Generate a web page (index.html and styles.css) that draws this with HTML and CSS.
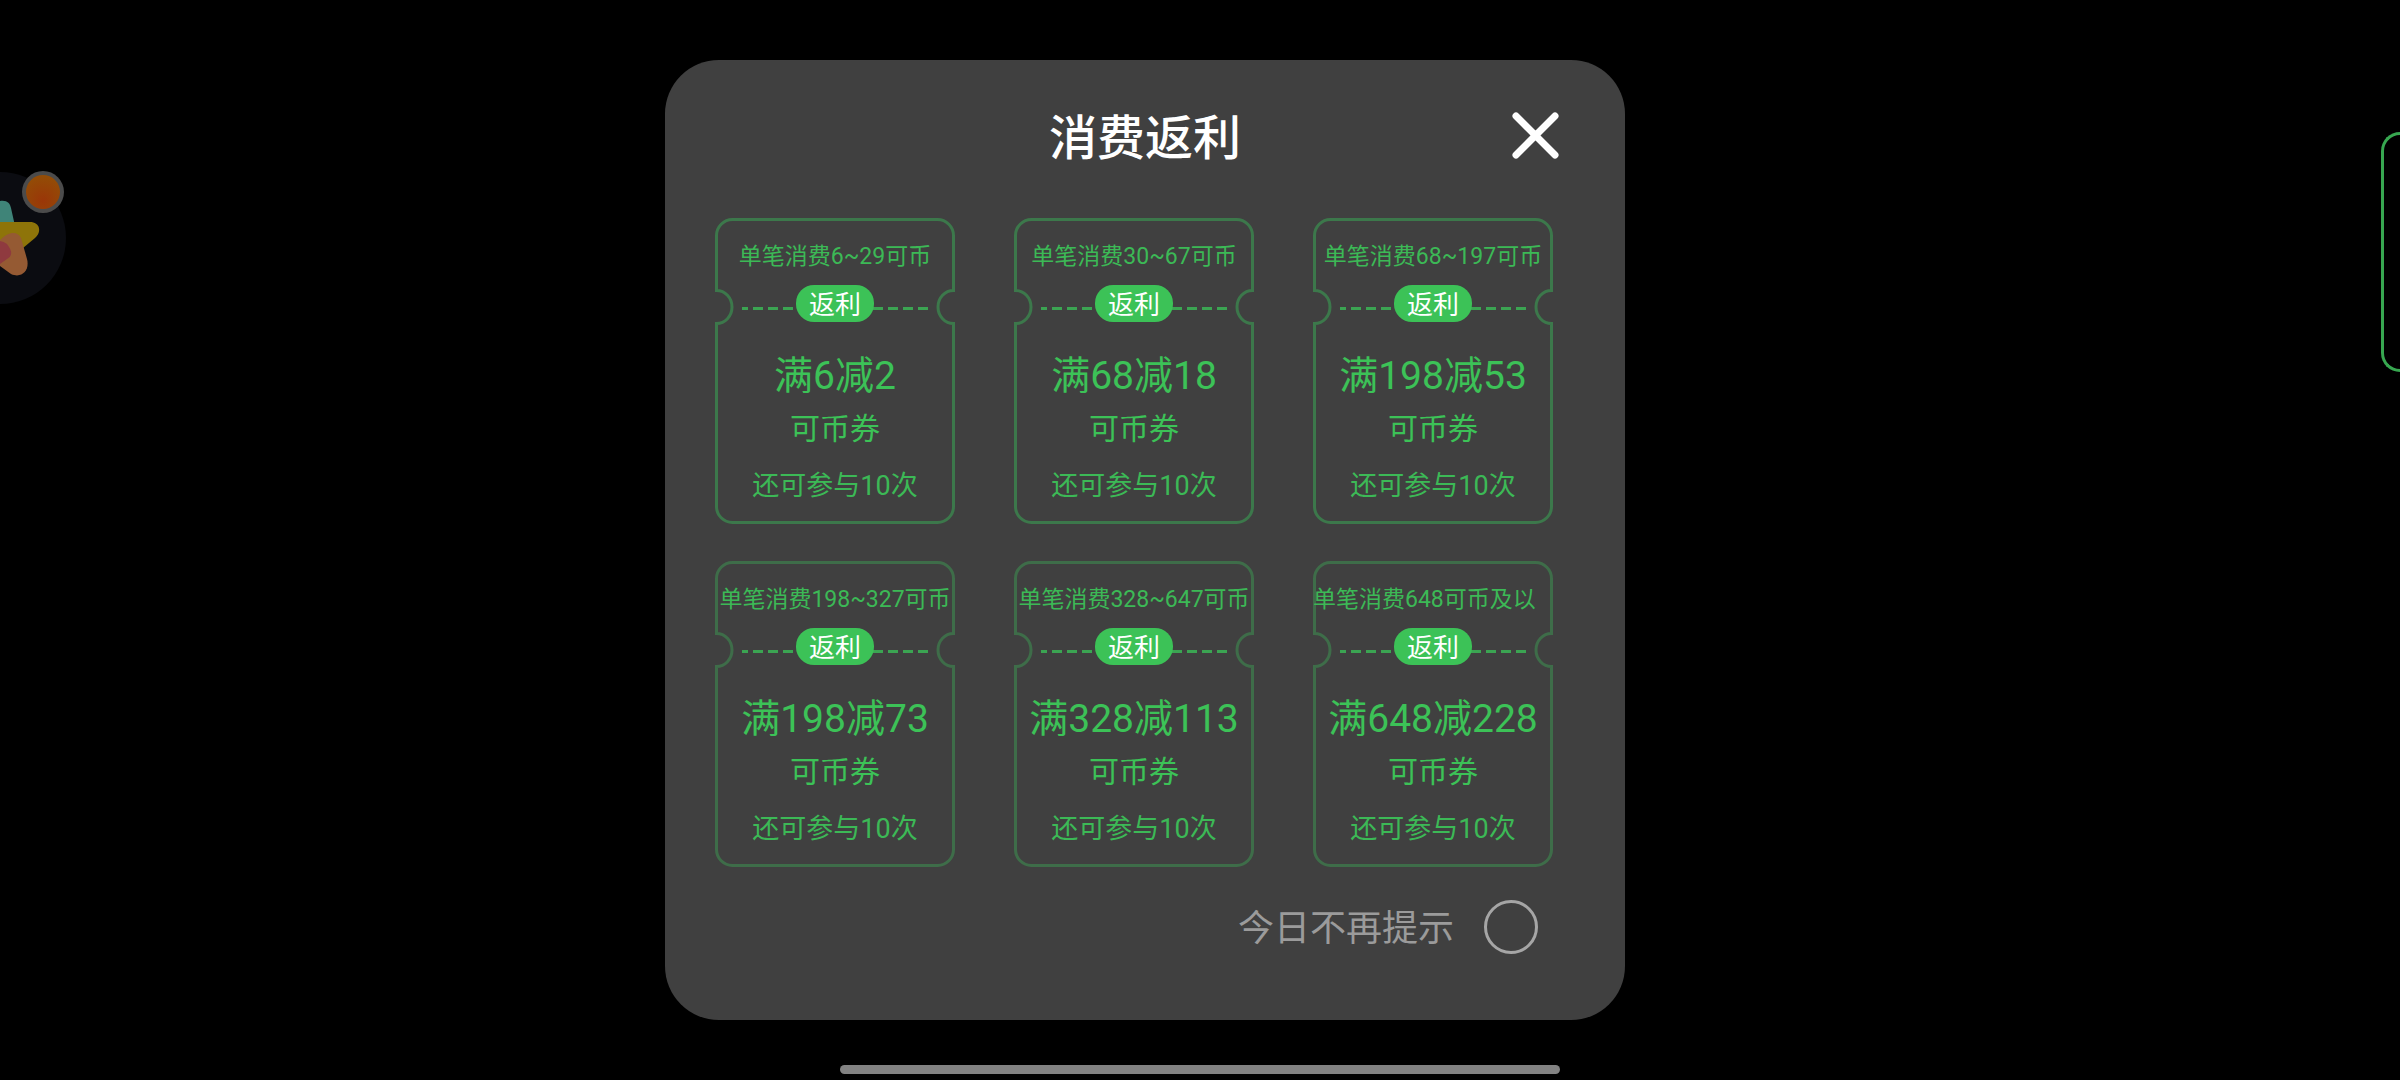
FILE: index.html
```html
<!DOCTYPE html>
<html lang="zh-CN">
<head>
<meta charset="utf-8">
<meta name="viewport" content="width=device-width, initial-scale=1">
<title>消费返利</title>
<link rel="stylesheet" href="styles.css">
</head>
<body>
<svg class="defs" aria-hidden="true">
  <symbol id="ticket-shape" viewBox="0 0 240 306">
    <path class="outline" d="M17.500 1.500H222.500A16 16 0 0 1 238.500 17.500V72.500A15.500 16.500 0 0 0 238.500 105.500V288.500A16 16 0 0 1 222.500 304.500H17.500A16 16 0 0 1 1.500 288.500V105.500A15.500 16.500 0 0 0 1.500 72.500V17.500A16 16 0 0 1 17.500 1.500Z"/>
    <path class="perforation" d="M27 90.500H213"/>
  </symbol>
</svg>

<svg class="float-ball" viewBox="0 0 80 150" aria-hidden="true">
  <defs>
    <radialGradient id="dot" cx="50%" cy="75%" r="70%">
      <stop offset="0" stop-color="#9a3608"/>
      <stop offset="1" stop-color="#934c06"/>
    </radialGradient>
  </defs>
  <circle cx="0" cy="78" r="66" fill="#0b0c11"/>
  <path d="M0 41C7 40 10 43 11 48L15 66H0Z" fill="#3f8478"/>
  <path d="M0 62H30C40 62 42 72 35 78L23 88L0 92Z" fill="#8e7409"/>
  <path d="M0 80C8 72 17 70 21 78L27 99C30 110 22 119 11 114L0 106Z" fill="#955a33"/>
  <path d="M0 81C4 82 7 83 9 87C13 93 11 97 7 99L0 104Z" fill="#8f3a3f"/>
  <circle cx="43" cy="32" r="21" fill="#4b4b4b"/>
  <circle cx="43" cy="32" r="17" fill="url(#dot)"/>
</svg>
<div class="side-card" aria-hidden="true"></div>

<main class="stage">
  <section class="dialog" role="dialog" aria-labelledby="dialog-title">
    <header class="dialog-header">
      <h1 class="dialog-title" id="dialog-title">消费返利</h1>
      <button class="close" type="button" aria-label="关闭">
        <svg viewBox="0 0 48 48" aria-hidden="true"><path d="M4 4L43 43M43 4L4 43"/></svg>
      </button>
    </header>

    <ul class="tickets">
      <li class="ticket">
        <svg class="ticket-bg" aria-hidden="true"><use href="#ticket-shape"/></svg>
        <p class="condition">单笔消费6~29可币</p>
        <span class="badge">返利</span>
        <p class="amount">满6减2</p>
        <p class="kind">可币券</p>
        <p class="remaining">还可参与10次</p>
      </li>
      <li class="ticket">
        <svg class="ticket-bg" aria-hidden="true"><use href="#ticket-shape"/></svg>
        <p class="condition">单笔消费30~67可币</p>
        <span class="badge">返利</span>
        <p class="amount">满68减18</p>
        <p class="kind">可币券</p>
        <p class="remaining">还可参与10次</p>
      </li>
      <li class="ticket">
        <svg class="ticket-bg" aria-hidden="true"><use href="#ticket-shape"/></svg>
        <p class="condition">单笔消费68~197可币</p>
        <span class="badge">返利</span>
        <p class="amount">满198减53</p>
        <p class="kind">可币券</p>
        <p class="remaining">还可参与10次</p>
      </li>
      <li class="ticket ticket-dim">
        <svg class="ticket-bg" aria-hidden="true"><use href="#ticket-shape"/></svg>
        <p class="condition">单笔消费198~327可币</p>
        <span class="badge">返利</span>
        <p class="amount">满198减73</p>
        <p class="kind">可币券</p>
        <p class="remaining">还可参与10次</p>
      </li>
      <li class="ticket ticket-dim">
        <svg class="ticket-bg" aria-hidden="true"><use href="#ticket-shape"/></svg>
        <p class="condition">单笔消费328~647可币</p>
        <span class="badge">返利</span>
        <p class="amount">满328减113</p>
        <p class="kind">可币券</p>
        <p class="remaining">还可参与10次</p>
      </li>
      <li class="ticket ticket-dim">
        <svg class="ticket-bg" aria-hidden="true"><use href="#ticket-shape"/></svg>
        <p class="condition condition-start">单笔消费648可币及以</p>
        <span class="badge">返利</span>
        <p class="amount">满648减228</p>
        <p class="kind">可币券</p>
        <p class="remaining">还可参与10次</p>
      </li>
    </ul>

    <footer class="dialog-footer">
      <label class="mute" for="mute-today">今日不再提示</label>
      <input class="mute-box" type="checkbox" id="mute-today">
    </footer>
  </section>
</main>
<div class="home-bar" aria-hidden="true"></div>
</body>
</html>
```

FILE: styles.css
```css
* {
  box-sizing: border-box;
}

body {
  margin: 0;
  min-height: 100vh;
  position: relative;
  overflow-x: hidden;
  background: #000;
  color: #3cc257;
  font-family: Roboto, "Noto Sans CJK SC", sans-serif;
}

h1,
p,
ul {
  margin: 0;
  padding: 0;
}

.defs {
  position: absolute;
  width: 0;
  height: 0;
}

/* Screen area; the right inset mirrors the camera cut-out */
.stage {
  min-height: 100vh;
  padding: 60px 110px 60px 0;
  display: flex;
  align-items: center;
  justify-content: center;
}

.dialog {
  width: 960px;
  max-width: 100%;
  padding: 40px 0 66px;
  border-radius: 54px;
  background: #404040;
}

.dialog-header {
  display: grid;
  grid-template-columns: 1fr auto 1fr;
  align-items: center;
  padding: 0 65px;
}

.dialog-title {
  grid-column: 2;
  color: #fff;
  font-size: 48px;
  font-weight: 500;
  line-height: 78px;
}

.close {
  justify-self: end;
  width: 48px;
  height: 54px;
  padding: 0 0 6px;
  border: 0;
  background: none;
  cursor: pointer;
}

.close svg {
  display: block;
  width: 48px;
  height: 48px;
  fill: none;
  stroke: #fff;
  stroke-width: 7;
  stroke-linecap: round;
}

.tickets {
  display: grid;
  grid-template-columns: repeat(3, 1fr);
  gap: 37px 59px;
  margin-top: 40px;
  padding: 0 72px 0 50px;
  list-style: none;
}

.ticket {
  position: relative;
  display: flex;
  flex-direction: column;
  align-items: center;
  padding: 19px 0 18px;
  color: #3cc257;
  white-space: nowrap;
}

.ticket-bg {
  position: absolute;
  inset: 0;
  z-index: 0;
  width: 100%;
  height: 100%;
  color: #3c784b;
}

.ticket-dim .ticket-bg {
  color: #3e6d49;
}

.outline {
  fill: none;
  stroke: currentColor;
  stroke-width: 3;
}

.perforation {
  fill: none;
  stroke: #3ba452;
  stroke-width: 3;
  stroke-dasharray: 10 5;
  stroke-dashoffset: 4;
}

.condition,
.badge,
.amount,
.kind,
.remaining {
  position: relative;
}

.condition,
.remaining {
  color: #3cb956;
  line-height: 39px;
}

.condition {
  font-size: 23px;
}

.condition-start {
  align-self: flex-start;
}

.badge {
  width: 78px;
  height: 37px;
  margin-top: 9px;
  border-radius: 18px;
  background: #3cc257;
  color: #fff;
  font-size: 26px;
  line-height: 40px;
  text-align: center;
}

.amount {
  margin-top: 30px;
  font-size: 39px;
  line-height: 48px;
}

.kind {
  margin-top: 11px;
  font-size: 30px;
  line-height: 36px;
}

.remaining {
  margin-top: 20px;
  font-size: 27px;
}

.dialog-footer {
  display: flex;
  align-items: center;
  justify-content: flex-end;
  gap: 30px;
  margin-top: 33px;
  padding-right: 87px;
}

.mute {
  padding-top: 5px;
  color: #9b9b9b;
  font-size: 36px;
  line-height: 49px;
}

.mute-box {
  appearance: none;
  width: 54px;
  height: 54px;
  margin: 0;
  border: 3px solid #a6a6a6;
  border-radius: 50%;
}

.mute-box:checked {
  background: #3cc257;
}

/* Game screen elements that stay visible beside the dialog */
.float-ball {
  position: absolute;
  top: 160px;
  left: 0;
  width: 80px;
  height: 150px;
}

.side-card {
  position: absolute;
  top: 132px;
  right: 0;
  width: 19px;
  height: 240px;
  border: 3px solid #37a750;
  border-right: 0;
  border-radius: 19px 0 0 19px;
}

.home-bar {
  position: fixed;
  bottom: 6px;
  left: 50%;
  width: 30%;
  height: 9px;
  border-radius: 5px;
  background: #828282;
  transform: translateX(-50%);
}
```
